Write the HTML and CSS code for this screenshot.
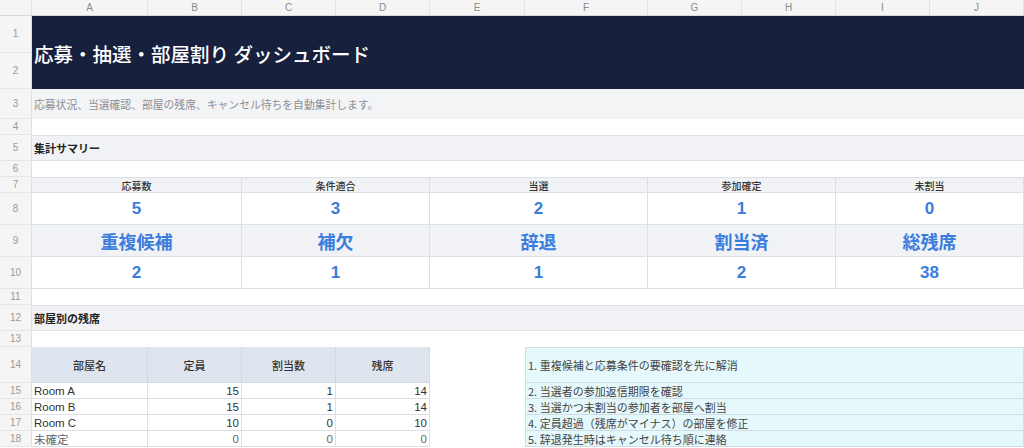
FILE: index.html
```html
<!DOCTYPE html>
<html lang="ja">
  <head>
    <meta charset="UTF-8" />
    <meta name="viewport" content="width=device-width, initial-scale=1.0" />
    <title>応募・抽選・部屋割り ダッシュボード</title>
    <link rel="stylesheet" href="styles.css">
  </head>
  <body>
    <div class="sheet">
      <div class="row colhead">
        <div class="rn"></div>
        <div>A</div><div>B</div><div>C</div><div>D</div><div>E</div>
        <div>F</div><div>G</div><div>H</div><div>I</div><div>J</div>
      </div>

      <div class="row r-title">
        <div class="rn rn-split"><span>1</span><span>2</span></div>
        <div class="cell title span-all">応募・抽選・部屋割り ダッシュボード</div>
      </div>

      <div class="row r-sub">
        <div class="rn">3</div>
        <div class="cell subtitle span-all">応募状況、当選確認、部屋の残席、キャンセル待ちを自動集計します。</div>
      </div>

      <div class="row r-blank">
        <div class="rn">4</div>
        <div class="cell span-all"></div>
      </div>

      <div class="row r-section">
        <div class="rn">5</div>
        <div class="cell section span-all">集計サマリー</div>
      </div>

      <div class="row r-blank">
        <div class="rn">6</div>
        <div class="cell span-all"></div>
      </div>

      <div class="row r-kpi-label">
        <div class="rn">7</div>
        <div class="cell kpi span2">応募数</div>
        <div class="cell kpi span2">条件適合</div>
        <div class="cell kpi span2">当選</div>
        <div class="cell kpi span2">参加確定</div>
        <div class="cell kpi span2">未割当</div>
      </div>

      <div class="row r-kpi">
        <div class="rn">8</div>
        <div class="cell kpi value span2">5</div>
        <div class="cell kpi value span2">3</div>
        <div class="cell kpi value span2">2</div>
        <div class="cell kpi value span2">1</div>
        <div class="cell kpi value span2">0</div>
      </div>

      <div class="row r-kpi alt">
        <div class="rn">9</div>
        <div class="cell kpi big span2">重複候補</div>
        <div class="cell kpi big span2">補欠</div>
        <div class="cell kpi big span2">辞退</div>
        <div class="cell kpi big span2">割当済</div>
        <div class="cell kpi big span2">総残席</div>
      </div>

      <div class="row r-kpi">
        <div class="rn">10</div>
        <div class="cell kpi value span2">2</div>
        <div class="cell kpi value span2">1</div>
        <div class="cell kpi value span2">1</div>
        <div class="cell kpi value span2">2</div>
        <div class="cell kpi value span2">38</div>
      </div>

      <div class="row r-blank">
        <div class="rn">11</div>
        <div class="cell span-all"></div>
      </div>

      <div class="row r-section">
        <div class="rn">12</div>
        <div class="cell section span-all">部屋別の残席</div>
      </div>

      <div class="row r-blank">
        <div class="rn">13</div>
        <div class="cell span-all"></div>
      </div>

      <div class="row r-thead">
        <div class="rn">14</div>
        <div class="cell th">部屋名</div>
        <div class="cell th">定員</div>
        <div class="cell th">割当数</div>
        <div class="cell th">残席</div>
        <div class="cell gap"></div>
        <div class="cell note span5">1. 重複候補と応募条件の要確認を先に解消</div>
      </div>

      <div class="row r-line">
        <div class="rn">15</div>
        <div class="cell td">Room A</div>
        <div class="cell td num">15</div>
        <div class="cell td num">1</div>
        <div class="cell td num">14</div>
        <div class="cell gap"></div>
        <div class="cell note span5">2. 当選者の参加返信期限を確認</div>
      </div>

      <div class="row r-line">
        <div class="rn">16</div>
        <div class="cell td">Room B</div>
        <div class="cell td num">15</div>
        <div class="cell td num">1</div>
        <div class="cell td num">14</div>
        <div class="cell gap"></div>
        <div class="cell note span5">3. 当選かつ未割当の参加者を部屋へ割当</div>
      </div>

      <div class="row r-line">
        <div class="rn">17</div>
        <div class="cell td">Room C</div>
        <div class="cell td num">10</div>
        <div class="cell td num">0</div>
        <div class="cell td num">10</div>
        <div class="cell gap"></div>
        <div class="cell note span5">4. 定員超過（残席がマイナス）の部屋を修正</div>
      </div>

      <div class="row r-line">
        <div class="rn">18</div>
        <div class="cell td muted">未確定</div>
        <div class="cell td num muted">0</div>
        <div class="cell td num muted">0</div>
        <div class="cell td num muted">0</div>
        <div class="cell gap"></div>
        <div class="cell note span5">5. 辞退発生時はキャンセル待ち順に連絡</div>
      </div>
    </div>
  </body>
</html>
```

FILE: styles.css
```css
body {
  margin: 0;
  background: #ffffff;
  font-family: "Liberation Sans", "Noto Sans CJK JP", sans-serif;
  color: #333;
  overflow: hidden;
}

.sheet {
  display: flex;
  flex-direction: column;
  width: 1024px;
}

.row {
  display: grid;
  grid-template-columns: 32px 116px 94px 94px 94px 95px 123px 94px 94px 94px 1fr;
  box-sizing: border-box;
}

.cell {
  display: flex;
  align-items: center;
  box-sizing: border-box;
  padding: 0 2px;
  white-space: nowrap;
  overflow: hidden;
  font-size: 11px;
}

.span-all {
  grid-column: span 10;
}

.span2 {
  grid-column: span 2;
}

.span5 {
  grid-column: span 5;
}

/* row numbers */
.rn {
  display: flex;
  align-items: center;
  justify-content: center;
  background: #f5f5f6;
  color: #999;
  font-size: 10px;
  border-right: 1px solid #dedfe2;
  border-bottom: 1px solid #e4e5e8;
  box-sizing: border-box;
}

.rn-split {
  flex-direction: column;
  border-bottom: none;
}

.rn-split span {
  flex: 1;
  width: 100%;
  display: flex;
  align-items: center;
  justify-content: center;
  border-bottom: 1px solid #e4e5e8;
  box-sizing: border-box;
}

/* column letters */
.colhead {
  height: 16px;
  background: #f5f5f6;
  border-bottom: 1px solid #d6d8dc;
}

.colhead div {
  display: flex;
  align-items: center;
  justify-content: center;
  color: #8a8a8a;
  font-size: 10px;
  border-right: 1px solid #e2e3e6;
}

.colhead .rn {
  border-bottom: none;
}

/* title band */
.r-title {
  height: 73px;
}

.title {
  background: #17203d;
  color: #ffffff;
  font-family: "Noto Sans CJK JP", sans-serif;
  font-size: 19.5px;
  font-weight: 500;
  padding-left: 2px;
  padding-top: 2px;
}

.r-sub {
  height: 30px;
}

.subtitle {
  background: #f3f4f6;
  color: #8b8f96;
  font-family: "Noto Sans CJK JP", sans-serif;
  font-size: 10.8px;
}

.r-blank {
  height: 16px;
}

.r-section {
  height: 26px;
}

.section {
  background: #f1f2f5;
  border-top: 1px solid #e0e2e6;
  border-bottom: 1px solid #e0e2e6;
  color: #222;
  font-family: "Noto Sans CJK JP", sans-serif;
  font-weight: bold;
}

/* summary blocks */
.r-kpi-label {
  height: 16px;
}

.kpi {
  justify-content: center;
  border-right: 1px solid #dcdfe4;
  border-bottom: 1px solid #dcdfe4;
  font-family: "Noto Sans CJK JP", sans-serif;
}

.r-kpi-label .kpi {
  background: #f1f2f5;
  border-top: 1px solid #dcdfe4;
  color: #333;
  font-weight: 500;
  font-size: 10px;
}

.r-kpi {
  height: 32px;
}

.r-kpi.alt .kpi {
  background: #f1f2f5;
}

.value {
  color: #3b7ddd;
  font-family: "Liberation Sans", sans-serif;
  font-size: 17px;
  font-weight: bold;
}

.big {
  color: #3b7ddd;
  font-size: 18px;
  font-weight: bold;
}

/* room table */
.r-thead {
  height: 36px;
}

.th {
  justify-content: center;
  background: #dfe5ef;
  border-right: 1px solid #d3d9e3;
  border-bottom: 1px solid #d3d9e3;
  color: #333;
  font-family: "Noto Sans CJK JP", sans-serif;
  font-weight: 500;
  font-size: 11px;
}

.r-line {
  height: 16px;
}

.td {
  border-right: 1px solid #dcdfe4;
  border-bottom: 1px solid #dcdfe4;
  font-size: 11.5px;
  color: #333;
}

.num {
  justify-content: flex-end;
}

.muted {
  color: #666;
}

.note {
  background: #e5f8fc;
  border-left: 1px solid #cddde3;
  border-right: 1px solid #cfdfe5;
  border-bottom: 1px solid #cddde3;
  color: #444;
  font-family: "Noto Sans CJK JP", sans-serif;
  font-size: 11px;
}

.r-thead .note {
  border-top: 1px solid #cddde3;
}
```
